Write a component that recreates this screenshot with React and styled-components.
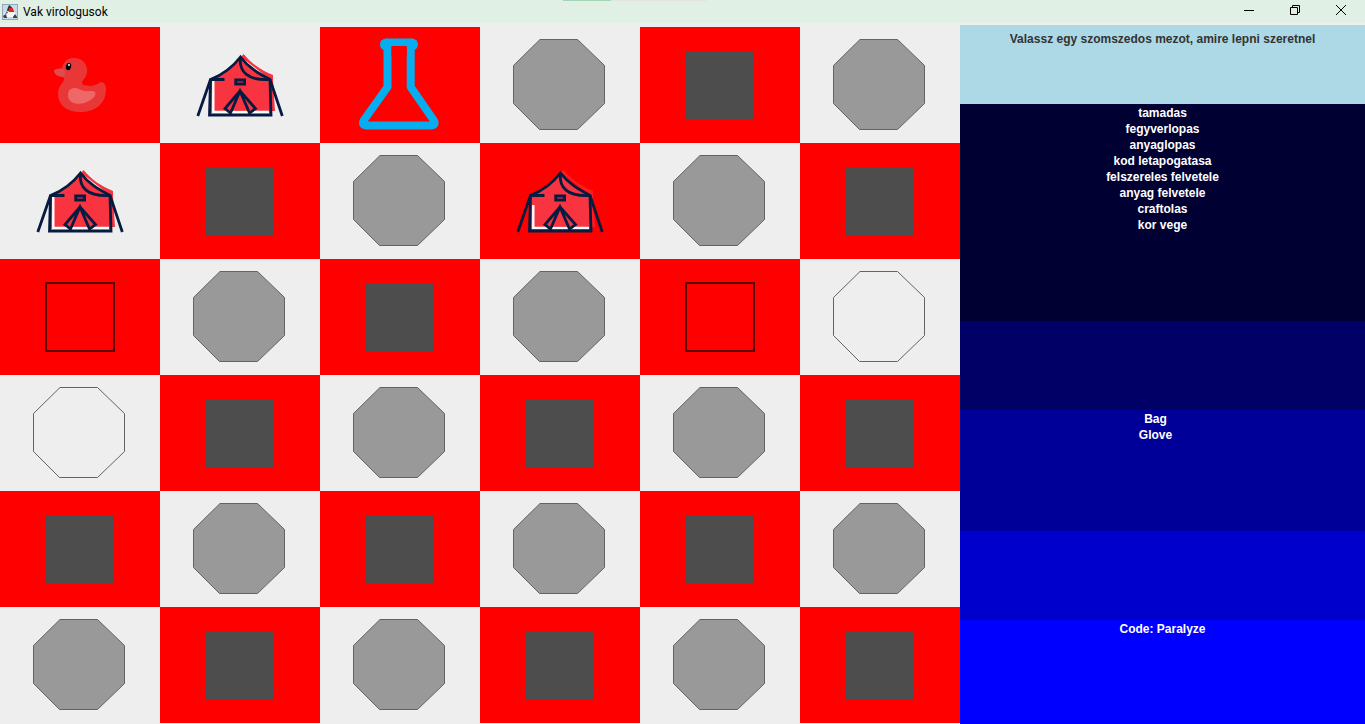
import React from "react";
import styled, { createGlobalStyle } from "styled-components";

const GlobalStyle = createGlobalStyle`
  *, *::before, *::after { box-sizing: border-box; }
  body { margin: 0; background: #eeeeee; font-family: "Liberation Sans", Arial, sans-serif; }
`;

const Window = styled.div`
  display: flex;
  flex-direction: column;
  min-height: 100vh;
`;

const TitleBar = styled.header`
  position: relative;
  display: flex;
  align-items: center;
  height: 23px;
  padding: 0 1px 0 2px;
  background: #e0f0e5;
`;

const TabEdge = styled.div`
  position: absolute;
  top: 0;
  left: 563px;
  width: 144px;
  height: 1px;
  background: linear-gradient(90deg, #a4d3b5 33%, #e3e3e3 33%);
`;

const Title = styled.h1`
  flex: 1;
  margin: 0 0 0 5px;
  font: 400 12px/16px Roboto, "Noto Sans", sans-serif;
  color: #000;
`;

const WindowButton = styled.button`
  display: flex;
  align-items: center;
  justify-content: center;
  width: 46px;
  height: 23px;
  padding: 0 0 3px;
  border: 0;
  background: transparent;
`;

const Content = styled.main`
  display: flex;
  flex: 1;
  padding-top: 2px;
`;

const Board = styled.section`
  display: grid;
  flex: 960 1 0;
  grid-template-columns: repeat(6, 1fr);
  grid-auto-rows: 116px;
  padding-top: 2px;
`;

const Cell = styled.div`
  display: flex;
  justify-content: center;
  background: ${(p) => (p.$red ? "#ff0000" : "#eeeeee")};
`;

const Sidebar = styled.aside`
  display: flex;
  flex: 405 1 0;
  flex-direction: column;
`;

const Panel = styled.div`
  flex: ${(p) => (p.$fill ? "1 0 auto" : "none")};
  min-height: ${(p) => p.$height}px;
  padding-top: ${(p) => p.$top || 1}px;
  background: ${(p) => p.$bg};
  color: ${(p) => p.$color || "#ffffff"};
  font-size: 12px;
  font-weight: 700;
  line-height: 16px;
  text-align: center;
`;

const Line = styled.p`
  margin: 0;
`;

const List = styled.ul`
  margin: 0;
  padding: 0 ${(p) => p.$inset || 0}px 0 0;
  list-style: none;
`;

const Drawing = ({ children }) => (
  <svg width="160" height="116" viewBox="0 0 160 116" aria-hidden="true">
    {children}
  </svg>
);

const Octagon = ({ fill }) => (
  <Drawing>
    <path
      d="M60 12.500H97.500L124.500 38.500V76.500L97.500 102.500H59.500L33.500 76.500V38.500Z"
      fill={fill}
      stroke="#636363"
    />
  </Drawing>
);

const Square = () => (
  <Drawing>
    <rect x="46" y="24" width="68" height="68" fill="#4d4d4d" />
  </Drawing>
);

const EmptySquare = () => (
  <Drawing>
    <rect x="46" y="24" width="68" height="68" fill="none" stroke="#5c0000" strokeWidth="2" />
  </Drawing>
);

const Duck = () => (
  <Drawing>
    <path
      d="M74 31C66 31 62 37 62 43C62 49 64 50 64 53C62 57 58 60 58 67C58 78 67 85 80 85C95 85 106 77 106 62C106 57 103 54 99 56C93 60 88 59 84 58C81 57 82 54 84 52C91 44 86 31 74 31Z"
      fill="#e93636"
    />
    <path d="M54 43C57 42 60 41 63 42C66 44 66 48 63 50C59 50 54 48 54 43Z" fill="#e24b4b" />
    <path d="M68 68C68 61 74 60 79 62C84 65 88 64 93 64C97 65 96 69 92 72C84 79 68 79 68 68Z" fill="#ef6767" />
    <ellipse cx="68.500" cy="39.500" rx="2.600" ry="3.700" transform="rotate(15 68.500 39.500)" fill="#000" />
    <circle cx="69" cy="38" r="1" fill="#fff" />
  </Drawing>
);

const Tent = ({ shade, whiteTop }) => (
  <Drawing>
    <path d="M83.500 27C92 37 101 43 113 48V54L115 84H111V53L81 30Z" fill={shade} />
    <path d="M51 52C63 47 72 41 80.500 30C90 41 98 47 110 52V86H50Z" fill="#f7343f" />
    <path d={`M53.300 ${whiteTop}V85H109`} fill="none" stroke="#fff" strokeWidth="2.400" />
    <path d="M80 64L66 81L73 83.500H87L94 81Z" fill="#f7343f" />
    <g fill="none" stroke="#061b40" strokeWidth="2.800">
      <path d="M49.500 88L50.500 52.500C62 48 72 41 80.500 30C89 41 98 46 110 52.500L111 88Z" />
      <path d="M50.500 52.500L37.800 89M110 52.500L122.300 89M50 52.500H64.500M80.500 31C79 44 87 54 110 52.500" />
      <path d="M75.700 53H84.600V57H75.700Z" />
      <path d="M80 64L65 81.500L70.500 86L80 64L89.500 86L95.500 81.500Z" />
    </g>
  </Drawing>
);

const Flask = () => (
  <Drawing>
    <path
      d="M67.500 16V60L44 93Q41 98.500 47 98.500H110Q117 98.500 113.500 93L90.700 60V16M66 15.500H92"
      fill="none"
      stroke="#07aeef"
      strokeWidth="8"
      strokeLinejoin="round"
    />
    <circle cx="66" cy="17.500" r="6" fill="#07aeef" />
    <circle cx="92" cy="17.500" r="6" fill="#07aeef" />
    <rect x="71.500" y="19" width="15.200" height="10" fill="#ff0000" />
  </Drawing>
);

const FIELDS = {
  duck: <Duck />,
  tent: <Tent shade="#f7343f" whiteTop={54} />,
  tentOnRed: <Tent shade="#fb1c22" whiteTop={62} />,
  flask: <Flask />,
  oct: <Octagon fill="#999999" />,
  openOct: <Octagon fill="none" />,
  sq: <Square />,
  openSq: <EmptySquare />,
};

const ROWS = [
  ["duck", "tent", "flask", "oct", "sq", "oct"],
  ["tent", "sq", "oct", "tentOnRed", "oct", "sq"],
  ["openSq", "oct", "sq", "oct", "openSq", "openOct"],
  ["openOct", "sq", "oct", "sq", "oct", "sq"],
  ["sq", "oct", "sq", "oct", "sq", "oct"],
  ["oct", "sq", "oct", "sq", "oct", "sq"],
];

const ACTIONS = [
  "tamadas",
  "fegyverlopas",
  "anyaglopas",
  "kod letapogatasa",
  "felszereles felvetele",
  "anyag felvetele",
  "craftolas",
  "kor vege",
];

const AppIcon = () => (
  <svg width="16" height="16" viewBox="0 0 16 16" aria-hidden="true">
    <rect x="0.500" y="0.500" width="15" height="15" fill="#c9d9e6" stroke="#93a9bb" />
    <path d="M7 1C9 2 11 4 12 8L6 8L5 6Z" fill="#2b2f36" />
    <path d="M2 9L5 7L12 8L14 10L12 13H4Z" fill="#f6f8fa" />
    <path d="M1 12L4 10L5 14H2ZM11 13L13 10L15 13V14H11Z" fill="#3c4148" />
    <path d="M5 7L6 9L3 10Z" fill="#50565e" />
    <circle cx="8.800" cy="6" r="2.300" fill="#e8281c" />
  </svg>
);

export default function App() {
  return (
    <Window>
      <GlobalStyle />
      <TitleBar>
        <TabEdge />
        <AppIcon />
        <Title>Vak virologusok</Title>
        <WindowButton aria-label="Minimize">
          <svg width="10" height="10" viewBox="0 0 10 10">
            <path d="M0 5.500H10" stroke="#000" />
          </svg>
        </WindowButton>
        <WindowButton aria-label="Restore">
          <svg width="10" height="10" viewBox="0 0 10 10" fill="none" stroke="#000">
            <path d="M0.500 2.500H7.500V9.500H0.500ZM2.500 2.500V0.500H9.500V7.500H7.500" />
          </svg>
        </WindowButton>
        <WindowButton aria-label="Close">
          <svg width="10" height="10" viewBox="0 0 10 10" stroke="#000">
            <path d="M0 0L10 10M10 0L0 10" />
          </svg>
        </WindowButton>
      </TitleBar>
      <Content>
        <Board>
          {ROWS.map((row, r) =>
            row.map((field, c) => (
              <Cell key={`${r}-${c}`} $red={(r + c) % 2 === 0}>
                {FIELDS[field]}
              </Cell>
            ))
          )}
        </Board>
        <Sidebar>
          <Panel $height={79} $top={6} $bg="#add8e6" $color="#333333">
            <Line>Valassz egy szomszedos mezot, amire lepni szeretnel</Line>
          </Panel>
          <Panel $height={217} $bg="#000033">
            <List>
              {ACTIONS.map((a) => (
                <li key={a}>{a}</li>
              ))}
            </List>
          </Panel>
          <Panel $height={89} $bg="#000066" />
          <Panel $height={121} $bg="#000099">
            <List $inset={14}>
              <li>Bag</li>
              <li>Glove</li>
            </List>
          </Panel>
          <Panel $height={89} $bg="#0000cc" />
          <Panel $height={104} $fill $bg="#0000ff">
            <Line>Code: Paralyze</Line>
          </Panel>
        </Sidebar>
      </Content>
    </Window>
  );
}
